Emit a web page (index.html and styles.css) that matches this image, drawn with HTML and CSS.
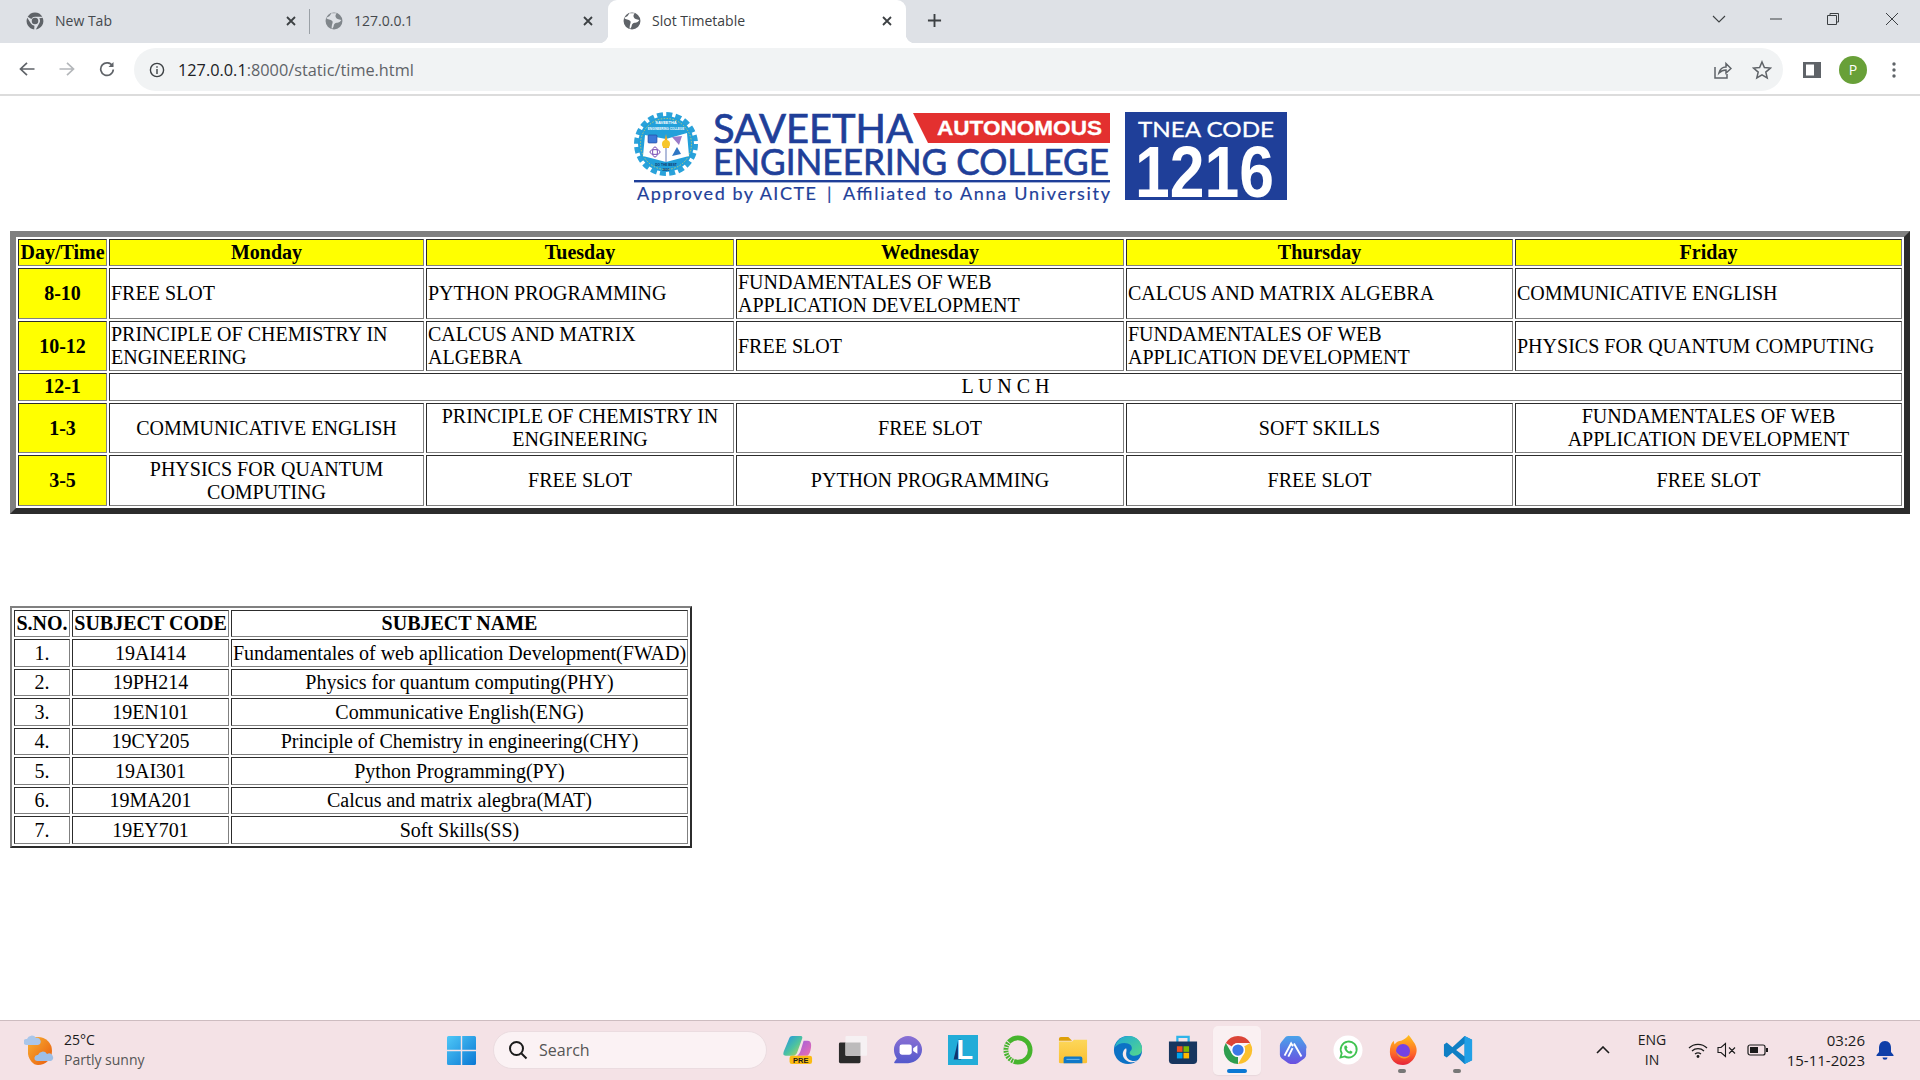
FILE: index.html
```html
<!DOCTYPE html>
<html lang="en">
<head>
<meta charset="utf-8">
<title>Slot Timetable</title>
<link rel="stylesheet" href="styles.css">
</head>
<body>
<header class="tabstrip">
  <div class="tab tab-first">
    <svg class="fav" viewBox="0 0 32 32"><path d="M3 8.5A15 15 0 0 1 29 8.5H16A7.5 7.5 0 0 0 9.5 12.25Z" fill="#5f6368"/><path d="M29.6 10A15 15 0 0 1 17.5 31L23.6 20A8.5 8.5 0 0 0 23.6 11Z" fill="#5f6368"/><path d="M14.6 31A15 15 0 0 1 2.3 10L8.7 20.5A8.5 8.5 0 0 0 15 24.5Z" fill="#5f6368"/><circle cx="16" cy="16" r="5.8" fill="#5f6368"/></svg>
    <span class="tab-title">New Tab</span>
    <svg class="tab-x" viewBox="0 0 12 12"><path d="M2 2L10 10M10 2L2 10"/></svg>
  </div>
  <div class="tab tab-second">
    <svg class="fav" viewBox="0 0 32 32"><circle cx="16" cy="16" r="15" fill="#80868b"/><path d="M11 2C9 7 7 8 2 10C5 14 10 12 13 16C15 19 11 23 12 30C17 27 14 23 18 20C21 18 26 20 29 14C24 13 20 13 19 9C18 6 19 4 21 2Z" fill="#dee1e6"/></svg>
    <span class="tab-title">127.0.0.1</span>
    <svg class="tab-x" viewBox="0 0 12 12"><path d="M2 2L10 10M10 2L2 10"/></svg>
  </div>
  <div class="tab tab-active">
    <svg class="fav" viewBox="0 0 32 32"><circle cx="16" cy="16" r="15" fill="#5f6368"/><path d="M11 2C9 7 7 8 2 10C5 14 10 12 13 16C15 19 11 23 12 30C17 27 14 23 18 20C21 18 26 20 29 14C24 13 20 13 19 9C18 6 19 4 21 2Z" fill="#fff"/></svg>
    <span class="tab-title">Slot Timetable</span>
    <svg class="tab-x" viewBox="0 0 12 12"><path d="M2 2L10 10M10 2L2 10"/></svg>
  </div>
  <svg class="newtab" viewBox="0 0 16 16"><path d="M8 1V15M1 8H15"/></svg>
  <div class="winctl">
    <svg class="wc wc-chev" viewBox="0 0 14 14"><path d="M1 4L7 10L13 4"/></svg>
    <svg class="wc wc-min" viewBox="0 0 14 14"><path d="M1 7H13"/></svg>
    <svg class="wc wc-max" viewBox="0 0 14 14"><path d="M1.5 3.5H10.5V12.5H1.5ZM4 3.5V1.5H12.5V10H10.5"/></svg>
    <svg class="wc wc-close" viewBox="0 0 14 14"><path d="M1 1L13 13M13 1L1 13"/></svg>
  </div>
</header>
<nav class="toolbar">
  <svg class="tb-ic tb-back" viewBox="0 0 16 16"><path d="M15.5 8H1.5M8 1.8L1.5 8L8 14.2"/></svg>
  <svg class="tb-ic tb-fwd" viewBox="0 0 16 16"><path d="M0.5 8H14.5M8 1.8L14.5 8L8 14.2"/></svg>
  <svg class="tb-ic tb-reload" viewBox="0 0 16 16"><path d="M13.5 5A6.3 6.3 0 1 0 14.3 8.5"/><path class="solid" d="M14.5 1V6H9.5Z"/></svg>
  <div class="omnibox">
    <svg class="omni-info" viewBox="0 0 16 16"><circle cx="8" cy="8" r="6.6"/><path d="M8 7V12M8 4.2V5.8"/></svg>
    <span class="url"><span class="url-host">127.0.0.1</span>:8000/static/time.html</span>
    <svg class="omni-ic omni-share" viewBox="0 0 20 20"><path d="M3 7V18H15V14M7 13C8 9 11 7 14 7V3.5L19 8.5L14 13V10C11 10 9 11 7 13Z"/></svg>
    <svg class="omni-ic omni-star" viewBox="0 0 20 20"><path d="M10 2L12.4 7.6L18.4 8.1L13.8 12.1L15.2 18L10 14.9L4.8 18L6.2 12.1L1.6 8.1L7.6 7.6Z"/></svg>
  </div>
  <svg class="sidepanel" viewBox="0 0 18 18"><path d="M0 1H18V17H0ZM3 3.5V14.5H11V3.5Z" fill-rule="evenodd"/></svg>
  <div class="avatar">P</div>
  <svg class="kebab" viewBox="0 0 4 16"><circle cx="2" cy="2" r="1.7"/><circle cx="2" cy="8" r="1.7"/><circle cx="2" cy="14" r="1.7"/></svg>
</nav>
<main class="page">
  <div class="logo-wrap">
    <svg class="logo" viewBox="0 0 654 92">
      <g>
        <circle cx="33" cy="34" r="29.5" fill="none" stroke="#2aa2da" stroke-width="5" stroke-dasharray="6 3.27"/>
        <circle cx="33" cy="34" r="28" fill="#22a0da"/>
        <circle cx="33" cy="34" r="25.5" fill="none" stroke="#f2d94e" stroke-width=".7" stroke-dasharray="1.5 1.5"/>
        <path d="M12 25L33 29L54 23L56 46L33 52L10 46Z" fill="#fff"/>
        <path d="M33 29V52" stroke="#1f3f99" stroke-width=".7"/>
        <rect x="15" y="25" width="9" height="8" rx="1" fill="#3b78d8" stroke="#1f3f99" stroke-width=".6"/>
        <path d="M30 38L33 24L36 38Z" fill="#f2a51f"/>
        <circle cx="33" cy="34" r="4" fill="#f6c62c"/>
        <path d="M39 27L49 26L46 35Z" fill="#9a7ac8"/>
        <ellipse cx="22" cy="42" rx="5" ry="2.4" fill="none" stroke="#7a4fb5" stroke-width="1"/>
        <ellipse cx="22" cy="42" rx="2.4" ry="5" fill="none" stroke="#7a4fb5" stroke-width="1"/>
        <path d="M39 46L44 37L48 44Z" fill="#2f77c4"/>
        <text class="lg-tiny" x="33" y="14" text-anchor="middle">SAVEETHA</text>
        <text class="lg-tiny lg-tiny2" x="33" y="20" text-anchor="middle">ENGINEERING COLLEGE</text>
        <text class="lg-tiny lg-tiny3" x="33" y="56" text-anchor="middle">DO THE BEST</text>
        <text class="lg-tiny lg-tiny3" x="33" y="61" text-anchor="middle">2001</text>
      </g>
      <text class="lg-title" x="80" y="33" textLength="200" lengthAdjust="spacingAndGlyphs">SAVEETHA</text>
      <path d="M280 3H477V33H295Z" fill="#e3302f"/>
      <text class="lg-auto" x="304" y="25" textLength="165" lengthAdjust="spacingAndGlyphs">AUTONOMOUS</text>
      <text class="lg-title lg-eng" x="80" y="65" textLength="396" lengthAdjust="spacingAndGlyphs">ENGINEERING COLLEGE</text>
      <rect x="1" y="70" width="476" height="2.4" fill="#1f3f99"/>
      <text class="lg-sub" x="4" y="90" textLength="179" lengthAdjust="spacing">Approved by AICTE</text>
      <text class="lg-sub" x="194" y="90">|</text>
      <text class="lg-sub" x="210" y="90" textLength="267" lengthAdjust="spacing">Affiliated to Anna University</text>
      <rect x="492" y="2" width="162" height="88" fill="#1f3f99"/>
      <text class="lg-tnea" x="505" y="26.5" textLength="136" lengthAdjust="spacingAndGlyphs">TNEA CODE</text>
      <text class="lg-code" x="502" y="87" textLength="139" lengthAdjust="spacingAndGlyphs">1216</text>
    </svg>
  </div>
  <table class="slots">
    <colgroup>
      <col class="c-day"><col class="c-mon"><col class="c-tue"><col class="c-wed"><col class="c-thu"><col class="c-fri">
    </colgroup>
    <tr class="h27"><th>Day/Time</th><th>Monday</th><th>Tuesday</th><th>Wednesday</th><th>Thursday</th><th>Friday</th></tr>
    <tr class="h51"><th>8-10</th><td>FREE SLOT</td><td>PYTHON PROGRAMMING</td><td>FUNDAMENTALES OF WEB APPLICATION DEVELOPMENT</td><td>CALCUS AND MATRIX ALGEBRA</td><td>COMMUNICATIVE ENGLISH</td></tr>
    <tr class="h50"><th>10-12</th><td>PRINCIPLE OF CHEMISTRY IN ENGINEERING</td><td>CALCUS AND MATRIX ALGEBRA</td><td>FREE SLOT</td><td>FUNDAMENTALES OF WEB APPLICATION DEVELOPMENT</td><td>PHYSICS FOR QUANTUM COMPUTING</td></tr>
    <tr class="h28"><th>12-1</th><td class="center" colspan="5">L U N C H</td></tr>
    <tr class="h50"><th>1-3</th><td class="center">COMMUNICATIVE ENGLISH</td><td class="center">PRINCIPLE OF CHEMISTRY IN ENGINEERING</td><td class="center">FREE SLOT</td><td class="center">SOFT SKILLS</td><td class="center">FUNDAMENTALES OF WEB APPLICATION DEVELOPMENT</td></tr>
    <tr class="h51"><th>3-5</th><td class="center">PHYSICS FOR QUANTUM COMPUTING</td><td class="center">FREE SLOT</td><td class="center">PYTHON PROGRAMMING</td><td class="center">FREE SLOT</td><td class="center">FREE SLOT</td></tr>
  </table>
  <table class="subjects">
    <colgroup><col class="c-sno"><col class="c-code"><col class="c-name"></colgroup>
    <tr><th>S.NO.</th><th>SUBJECT CODE</th><th>SUBJECT NAME</th></tr>
    <tr><td>1.</td><td>19AI414</td><td>Fundamentales of web apllication Development(FWAD)</td></tr>
    <tr><td>2.</td><td>19PH214</td><td>Physics for quantum computing(PHY)</td></tr>
    <tr><td>3.</td><td>19EN101</td><td>Communicative English(ENG)</td></tr>
    <tr><td>4.</td><td>19CY205</td><td>Principle of Chemistry in engineering(CHY)</td></tr>
    <tr><td>5.</td><td>19AI301</td><td>Python Programming(PY)</td></tr>
    <tr><td>6.</td><td>19MA201</td><td>Calcus and matrix alegbra(MAT)</td></tr>
    <tr><td>7.</td><td>19EY701</td><td>Soft Skills(SS)</td></tr>
  </table>
</main>
<footer class="taskbar">
  <div class="weather">
    <svg class="w-ic" viewBox="0 0 32 32"><defs><linearGradient id="sun" x1="0" y1="0" x2="1" y2="1"><stop offset="0" stop-color="#f9b233"/><stop offset="1" stop-color="#e8590c"/></linearGradient></defs><path d="M14 3A14 14 0 0 1 14 31C9 31 5 26 4 20V8C6 5 10 3 14 3Z" fill="url(#sun)"/><path d="M2 11a3 3 0 0 1 1-6a5 5 0 0 1 9-1a3.5 3.5 0 0 1 2 7Z" fill="#a9c6ea"/><path d="M13 27a3 3 0 0 1 1-6a5 5 0 0 1 9-1a3.5 3.5 0 0 1 4 7Z" fill="#9dbfe8"/></svg>
    <div class="w-text"><div class="w-temp">25°C</div><div class="w-desc">Partly sunny</div></div>
  </div>
  <svg class="start" viewBox="0 0 29 29"><defs><linearGradient id="win" x1="0" y1="0" x2="1" y2="1"><stop offset="0" stop-color="#4fc8f7"/><stop offset="1" stop-color="#0a78d4"/></linearGradient></defs><path d="M0 1.5Q0 0 1.5 0H13.8V13.8H0ZM15.2 0H27.5Q29 0 29 1.5V13.8H15.2ZM0 15.2H13.8V29H1.5Q0 29 0 27.5ZM15.2 15.2H29V27.5Q29 29 27.5 29H15.2Z" fill="url(#win)"/></svg>
  <div class="search">
    <svg class="s-ic" viewBox="0 0 20 20"><circle cx="8.5" cy="8.5" r="6.5"/><path d="M13.5 13.5L18.5 18.5"/></svg>
    <span>Search</span>
  </div>
  <div class="apps">
    <div class="app"><svg viewBox="0 0 32 32"><defs><linearGradient id="cop" x1="0" y1="0" x2="1" y2="1"><stop offset="0" stop-color="#1f8fe8"/><stop offset=".55" stop-color="#4dc3a0"/><stop offset="1" stop-color="#c8d84a"/></linearGradient><linearGradient id="cop2" x1="0" y1="0" x2="1" y2="1"><stop offset="0" stop-color="#9a5fe0"/><stop offset="1" stop-color="#ee6db0"/></linearGradient></defs><path d="M10 1H19C21 1 21 3 20 5L15 19C14 21 13 22 11 22H3C0 22 0 20 1 17L6 5C7 2 8 1 10 1Z" fill="url(#cop)"/><path d="M22 6H26C29 6 30 8 30 11C30 16 28 22 26 22H15C17 21 18 19 19 16Z" fill="url(#cop2)"/><rect x="7" y="22" width="24" height="9" rx="2.5" fill="#fbbb12"/><text class="pre" x="19" y="29.6" text-anchor="middle">PRE</text></svg></div>
    <div class="app"><svg viewBox="0 0 32 32"><rect x="1" y="8" width="23" height="22" rx="1.5" fill="#2b2b2b"/><rect x="8" y="1" width="23" height="21" rx="1" fill="#f6f1f3"/><rect x="8" y="8" width="16" height="14" fill="#bdbbbc"/></svg></div>
    <div class="app"><svg viewBox="0 0 32 32"><defs><linearGradient id="meet" x1="0" y1="0" x2="0" y2="1"><stop offset="0" stop-color="#8a70d4"/><stop offset="1" stop-color="#5359cc"/></linearGradient></defs><path d="M16 1C24 1 31 8 31 15.5C31 23.5 24 30 16 30H2C1 30 1 29 2 28L4 25C2 22 1 19 1 15.5C1 8 8 1 16 1Z" fill="url(#meet)"/><rect x="7" y="10" width="13" height="11" rx="2.5" fill="#fff"/><path d="M21.5 14L26 11V20L21.5 17Z" fill="#fff"/></svg></div>
    <div class="app"><svg viewBox="0 0 32 32"><rect x="0" y="0" width="32" height="32" fill="#22acd8"/><path d="M11 5H14V26H6Z" fill="#12356b"/><text class="l-mark" x="18" y="26" text-anchor="middle">L</text></svg></div>
    <div class="app"><svg viewBox="0 0 32 32"><circle cx="16" cy="16" r="13" fill="none" stroke="#46b42d" stroke-width="5"/><circle cx="16" cy="16" r="13" fill="none" stroke="#f4e2e6" stroke-width="5.5" stroke-dasharray="1 2 1 2 1 2 1 2 1 2 1 2 1 2 1 2 1 70" transform="rotate(110 16 16)"/></svg></div>
    <div class="app"><svg viewBox="0 0 32 32"><defs><linearGradient id="fold" x1="0" y1="0" x2="0" y2="1"><stop offset="0" stop-color="#fcd75a"/><stop offset="1" stop-color="#fbc032"/></linearGradient></defs><path d="M1 4Q1 2 3 2H11L15 6H1Z" fill="#dea009"/><path d="M1 7L15 7L17 5H31V29Q31 30 29 30H3Q1 30 1 29Z" fill="url(#fold)"/><path d="M6 30V25Q6 23 8 23H24Q26 23 26 25V30Z" fill="#0f78c8"/><path d="M9 26H23" stroke="#7cc0ee" stroke-width="1"/></svg></div>
    <div class="app"><svg viewBox="0 0 32 32"><defs><linearGradient id="edge" x1="0" y1="0" x2="1" y2="1"><stop offset="0" stop-color="#1fa8d8"/><stop offset="1" stop-color="#55d88a"/></linearGradient></defs><circle cx="16" cy="16" r="15" fill="#0c72c5"/><path d="M2 13C4 4 11 1 17 1C25 1 31 7 31 15C31 20 27 22 23 22C19 22 17 20 18 18C20 16 21 14 19 11C15 7 6 8 2 13Z" fill="url(#edge)"/><path d="M14 14C10 16 9 22 13 26C17 30 23 30 27 27C21 29 14 27 14 20C14 18 15 16 14 14Z" fill="#f5e8ec"/></svg></div>
    <div class="app"><svg viewBox="0 0 32 32"><path d="M10 9V2H22V9" fill="none" stroke="#2fb4e9" stroke-width="2.4"/><path d="M1 7H31V27Q31 31 27 31H5Q1 31 1 27Z" fill="#17365f"/><rect x="9.5" y="12" width="6" height="6" fill="#f25022"/><rect x="16.5" y="12" width="6" height="6" fill="#7fba00"/><rect x="9.5" y="19" width="6" height="6" fill="#00a4ef"/><rect x="16.5" y="19" width="6" height="6" fill="#ffb900"/></svg></div>
    <div class="app app-active"><svg viewBox="0 0 32 32"><path d="M3 8.5A15 15 0 0 1 29 8.5H16A7.5 7.5 0 0 0 9.5 12.25Z" fill="#db4437"/><path d="M29 8.5A15 15 0 0 1 16 31L22.5 19.75A7.5 7.5 0 0 0 22.5 12.25Z" fill="#fbc02d"/><path d="M16 31A15 15 0 0 1 3 8.5L9.5 19.75A7.5 7.5 0 0 0 16 23.5Z" fill="#2e9e4f"/><circle cx="16" cy="16" r="7.5" fill="#fff"/><circle cx="16" cy="16" r="6" fill="#3b78e7"/></svg></div>
    <div class="app"><svg viewBox="0 0 32 32"><defs><linearGradient id="hex" x1="0" y1="0" x2="0" y2="1"><stop offset="0" stop-color="#4aa3ea"/><stop offset="1" stop-color="#6a4fe0"/></linearGradient></defs><path d="M11 1H21Q23 1 24 2L30 11Q31 13 30 15L30 21Q30 23 28 25L21 30Q19 31 16 31Q13 31 11 30L4 25Q2 23 2 21V11Q2 9 4 7L8 2Q9 1 11 1Z" fill="url(#hex)"/><path d="M7 22L14 9L16 12M11 23L15.5 14M17 9L25 23" fill="none" stroke="#fff" stroke-width="2"/></svg></div>
    <div class="app"><svg viewBox="0 0 32 32"><circle cx="16" cy="16" r="15.5" fill="#fff"/><path d="M8 24L9.3 19.5A8.5 8.5 0 1 1 12.5 22.8Z" fill="none" stroke="#40c351" stroke-width="1.9"/><path d="M12.5 11.5C11.5 13 12 15.5 14 17.5C16 19.5 18.7 20.5 20.3 19.5L20.8 17.8L18.5 16.6L17.5 17.6C16.5 17.4 14.8 15.7 14.5 14.6L15.5 13.6L14.4 11.2Z" fill="#40c351"/></svg></div>
    <div class="app app-run"><svg viewBox="0 0 32 32"><defs><linearGradient id="ff" x1="0" y1="0" x2="0" y2="1"><stop offset="0" stop-color="#ffc21c"/><stop offset=".6" stop-color="#ff6a28"/><stop offset="1" stop-color="#e5223a"/></linearGradient></defs><path d="M22 0C25 4 26 5 27 7C31 12 31 17 30 20C28 27 22 32 16 32C8 32 2 26 2 18C2 13 3 9 6 6L7 10C9 7 12 6 14 6C17 5 20 3 22 0Z" fill="url(#ff)"/><circle cx="16" cy="17" r="7.5" fill="#7542e5"/><path d="M8 16C10 22 18 26 24 21C21 27 10 27 8 16Z" fill="#ff9a2a"/></svg></div>
    <div class="app app-run"><svg viewBox="0 0 32 32"><path d="M23 1L31 5V27L23 31L10 19L4 24L1 22V10L4 8L10 13ZM23 9L14 16L23 23Z" fill="#0f7fc4" fill-rule="evenodd"/><path d="M23 1L31 5V27L23 31Z" fill="#22a0e6"/></svg></div>
  </div>
  <div class="tray">
    <svg class="t-chev" viewBox="0 0 14 8"><path d="M1 7L7 1L13 7"/></svg>
    <div class="lang">ENG<br>IN</div>
    <svg class="t-wifi" viewBox="0 0 20 16"><path d="M1 6A13 13 0 0 1 19 6M4 9A9 9 0 0 1 16 9M7 12A5 5 0 0 1 13 12"/><circle class="dot" cx="10" cy="14.5" r="1.4"/></svg>
    <svg class="t-vol" viewBox="0 0 20 16"><path d="M1 5.5H4L8.5 1.5V14.5L4 10.5H1ZM12 5.5L18 11.5M18 5.5L12 11.5"/></svg>
    <svg class="t-bat" viewBox="0 0 22 14"><rect x="1" y="2" width="17" height="10" rx="2" fill="none"/><rect class="dot" x="3" y="4" width="8" height="6"/><path class="dot" d="M19 5H21V9H19Z"/></svg>
    <div class="clock">03:26<br>15-11-2023</div>
    <svg class="t-bell" viewBox="0 0 18 20"><path d="M9 1C5 1 3 4 3 8V12L0.5 15V16H17.5V15L15 12V8C15 4 13 1 9 1Z M6.5 17.5H11.5A2.5 2.2 0 0 1 6.5 17.5Z" fill="#0f3fa8"/></svg>
  </div>
</footer>
</body>
</html>
```
FILE: styles.css
```css
* { box-sizing: border-box; }
html, body { margin: 0; height: 100%; }
body {
  width: 1920px; height: 1080px; overflow: hidden;
  display: flex; flex-direction: column;
  background: #fff;
  font-family: "Open Sans", "Noto Sans", sans-serif;
}

/* tab strip */
.tabstrip { height: 43px; background: #dee1e6; display: flex; align-items: stretch; flex: none; }
.tab { display: flex; align-items: center; position: relative; font-size: 14px; color: #45494d; padding-bottom: 2px; }
.tab-first { width: 310px; padding-left: 26px; padding-right: 13px; }
.tab-first::after { content: ""; position: absolute; right: 0; top: 9px; height: 25px; width: 1px; background: #9aa0a6; }
.tab-second { width: 298px; padding-left: 15px; padding-right: 14px; }
.tab-active { width: 298px; padding-left: 15px; padding-right: 13px; background: #fff; color: #3c4043; border-radius: 9px 9px 0 0; }
.tab-active::before, .tab-active::after { content: ""; position: absolute; bottom: 0; width: 9px; height: 9px; }
.tab-active::before { left: -9px; background: radial-gradient(circle at 0 0, transparent 9px, #fff 9.5px); }
.tab-active::after { right: -9px; background: radial-gradient(circle at 100% 0, transparent 9px, #fff 9.5px); }
.fav { width: 18px; height: 18px; flex: none; margin-right: 11px; }
.tab-title { flex: 1; white-space: nowrap; }
.tab-x { width: 12px; height: 12px; flex: none; }
.tab-x path { stroke: #3c4043; stroke-width: 1.8; fill: none; }
.newtab { width: 15px; height: 15px; align-self: center; margin-left: 21px; flex: none; margin-bottom: 2px; }
.newtab path { stroke: #3c4043; stroke-width: 2; fill: none; }
.winctl { margin-left: auto; display: flex; align-items: center; height: 38px; padding-right: 21px; }
.wc { width: 14px; height: 14px; flex: none; }
.wc path { stroke: #3c4043; stroke-width: 1; fill: none; }
.wc-chev { margin-right: 43px; }
.wc-min { margin-right: 43px; }
.wc-max { margin-right: 45px; }
.wc-chev path { stroke-width: 1.1; }

/* toolbar */
.toolbar { height: 53px; flex: none; background: #fff; border-bottom: 2px solid #dcdcdc; display: flex; align-items: center; padding: 2px 0 0 19px; }
.tb-ic { width: 16px; height: 16px; flex: none; margin-bottom: 2px; }
.tb-ic path { fill: none; stroke: #5f6368; stroke-width: 1.7; }
.tb-ic path.solid { fill: #5f6368; stroke: none; }
.tb-back { margin-right: 24px; }
.tb-fwd { margin-right: 24px; }
.tb-fwd path { stroke: #b4b7ba; }
.tb-reload { margin-right: 19px; }
.omnibox { width: 1649px; height: 43px; background: #f1f3f4; border-radius: 22px; display: flex; align-items: center; padding-left: 15px; flex: none; }
.omni-info { width: 16px; height: 16px; fill: none; stroke: #3c4043; stroke-width: 1.4; flex: none; margin-right: 13px; }
.url { font-size: 16.3px; color: #5f6368; flex: 1; }
.url-host { color: #202124; }
.omni-ic { width: 20px; height: 20px; flex: none; fill: none; stroke: #5f6368; stroke-width: 1.5; }
.omni-share { margin-right: 20px; }
.omni-star { margin-right: 11px; }
.sidepanel { width: 18px; height: 18px; flex: none; fill: #5f6368; margin-left: 20px; }
.avatar { width: 28px; height: 28px; flex: none; border-radius: 50%; background: #68a038; color: #fff; font-size: 14px; display: flex; align-items: center; justify-content: center; margin-left: 18px; }
.kebab { width: 4px; height: 16px; flex: none; fill: #5f6368; margin-left: 25px; }

/* page */
.page { flex: 1; min-height: 0; padding: 14px 10px 0; font-family: "Liberation Serif", "Times New Roman", serif; font-size: 20px; color: #000; }
.logo-wrap { display: flex; justify-content: center; height: 121px; align-items: flex-start; }
.logo { width: 654px; height: 92px; display: block; overflow: visible; }
.lg-title { font-family: "Lato", sans-serif; font-size: 40px; fill: #1f3f99; stroke: #1f3f99; stroke-width: .7px; }
.lg-eng { font-size: 37px; }
.lg-auto { font-family: "Liberation Sans", sans-serif; font-weight: 700; font-size: 21px; fill: #fff; stroke: #fff; stroke-width: .3px; }
.lg-sub { font-family: "Lato", sans-serif; font-size: 18px; fill: #1f3f99; stroke: #1f3f99; stroke-width: .2px; }
.lg-tnea { font-family: "Lato", sans-serif; font-size: 21px; fill: #fff; stroke: #fff; stroke-width: .3px; }
.lg-code { font-family: "Liberation Sans", sans-serif; font-weight: 700; font-size: 73px; fill: #fff; }
.lg-tiny { font-family: "Liberation Sans", sans-serif; font-weight: 700; font-size: 4px; fill: #fff; }
.lg-tiny2 { font-size: 3px; }
.lg-tiny3 { font-size: 3.2px; fill: #12356b; }

table { border-collapse: separate; border-spacing: 2px; table-layout: fixed; }
td, th { padding: 1px; border: 1px inset #808080; }
.slots { width: 1900px; border: 6px outset #808080; }
.slots th { background: #ff0; text-align: center; }
.slots td.center { text-align: center; }
.c-day { width: 89px; } .c-mon { width: 315px; } .c-tue { width: 308px; }
.c-wed { width: 388px; } .c-thu { width: 387px; } .c-fri { width: 387px; }
.h27 { height: 27px; } .h51 { height: 51px; } .h50 { height: 50px; } .h28 { height: 28px; }
.h28 th, .h28 td { padding-bottom: 2px; }

.subjects { width: 682px; margin-top: 92px; border: 2px outset #808080; }
.subjects td { text-align: center; padding: 0; white-space: nowrap; }
.subjects tr { height: 27px; }
.subjects tr:nth-child(even) { height: 28px; }
.c-sno { width: 56px; } .c-code { width: 157px; } .c-name { width: 457px; }

/* taskbar */
.taskbar { height: 60px; flex: none; background: #f4e2e6; border-top: 1px solid #cdbcc0; display: flex; align-items: center; padding-bottom: 1px; }
.weather { width: 447px; display: flex; align-items: center; padding-left: 24px; flex: none; }
.w-ic { width: 32px; height: 32px; margin-right: 8px; flex: none; }
.w-text { font-size: 14px; line-height: 20px; color: #1b1b1b; }
.w-desc { color: #555; }
.start { width: 29px; height: 29px; flex: none; margin-right: 17px; }
.search { width: 274px; height: 38px; border-radius: 19px; background: #fbf2f4; border: 1px solid #ebdce0; display: flex; align-items: center; padding-left: 14px; font-size: 16px; color: #555; flex: none; }
.s-ic { width: 20px; height: 20px; margin-right: 11px; fill: none; stroke: #1a1a1a; stroke-width: 2; flex: none; }
.apps { display: flex; margin-left: 3px; flex: none; height: 49px; }
.app { width: 55px; height: 49px; display: flex; align-items: center; justify-content: center; position: relative; flex: none; }
.app svg { width: 30px; height: 30px; }
.app-active::before { content: ""; position: absolute; left: 3px; right: 4px; top: 0; bottom: 0; border-radius: 5px; background: #faf0f2; box-shadow: 0 1px 1px #e8d8dc; }
.app-active svg { position: relative; }
.app-active::after { content: ""; position: absolute; left: 17px; bottom: 2px; width: 20px; height: 4px; border-radius: 2px; background: #0a78d4; }
.app-run::after { content: ""; position: absolute; left: 23px; bottom: 2px; width: 8px; height: 4px; border-radius: 2px; background: #777; }
.pre { font-family: "Liberation Sans", sans-serif; font-size: 8px; font-weight: 700; fill: #1b1b1b; }
.l-mark { font-family: "Liberation Sans", sans-serif; font-size: 29px; font-weight: 700; fill: #fff; }
.tray { flex: 1; display: flex; align-items: center; position: relative; }
.t-chev { width: 14px; height: 8px; flex: none; margin-left: 111px; fill: none; stroke: #1b1b1b; stroke-width: 1.6; }
.lang { width: 40px; margin-left: 22px; font-size: 14px; line-height: 20px; text-align: center; color: #1b1b1b; flex: none; }
.t-wifi { width: 20px; height: 16px; margin-left: 16px; flex: none; fill: none; stroke: #1b1b1b; stroke-width: 1.3; }
.t-vol { width: 20px; height: 16px; margin-left: 9px; flex: none; fill: none; stroke: #1b1b1b; stroke-width: 1.1; }
.t-bat { width: 22px; height: 14px; margin-left: 10px; flex: none; fill: none; stroke: #1b1b1b; stroke-width: 1.2; }
.dot { fill: #1b1b1b; stroke: none; }
.clock { width: 90px; margin-left: 6px; font-size: 15px; line-height: 20px; text-align: right; color: #1b1b1b; flex: none; }
.t-bell { width: 18px; height: 20px; margin-left: 11px; flex: none; }
```
